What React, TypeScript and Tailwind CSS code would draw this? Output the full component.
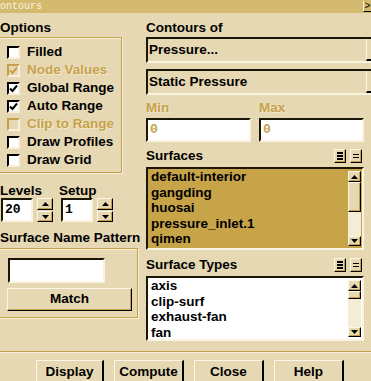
import React from "react";

const sunken =
  "border-2 border-t-[#1c1608] border-l-[#1c1608] border-b-[#faf3df] border-r-[#faf3df]";
const raised =
  "border border-t-[#fbf6e6] border-l-[#fbf6e6] border-b-black border-r-black shadow-[inset_-1px_-1px_0_#c4a04a]";
const etched =
  "border border-[#c4a04a] shadow-[1px_1px_0_#f8f0da,inset_1px_1px_0_#f8f0da]";

function Tick({ color }: { color: string }) {
  return (
    <svg width="9" height="9" viewBox="0 0 9 9">
      <path d="M1 4.5 L3.5 7 L8 1.5" fill="none" stroke={color} strokeWidth="2" />
    </svg>
  );
}

function Check({
  label,
  checked,
  disabled,
}: {
  label: string;
  checked?: boolean;
  disabled?: boolean;
}) {
  return (
    <div className="flex h-[18px] items-center">
      <span
        className={`flex h-[13px] w-[13px] items-center justify-center border-2 ${
          disabled
            ? "border-t-[#c4a04a] border-l-[#c4a04a] border-b-[#f8f0da] border-r-[#f8f0da] bg-[#e6d8b2]"
            : "border-t-black border-l-black border-b-[#f8f0da] border-r-[#f8f0da] bg-white"
        }`}
      >
        {checked && <Tick color={disabled ? "#c4a04a" : "#000"} />}
      </span>
      <span
        className={`ml-[7px] whitespace-nowrap ${
          disabled ? "text-[#c6a24a] [text-shadow:1px_1px_0_#f3ead0]" : "text-black"
        }`}
      >
        {label}
      </span>
    </div>
  );
}

function Arrow({ up }: { up?: boolean }) {
  return (
    <svg width="7" height="4" viewBox="0 0 7 4">
      <path d={up ? "M0 4 L3.5 0 L7 4 Z" : "M0 0 L7 0 L3.5 4 Z"} fill="#000" />
    </svg>
  );
}

function Spin({ value }: { value: string }) {
  return (
    <div className="flex h-[24px] items-start">
      <div
        className={`flex h-[24px] w-[32px] items-center bg-white pl-[2px] font-['Liberation_Mono',monospace] text-[13px] ${sunken}`}
      >
        {value}
      </div>
      <div className="ml-[4px] flex w-[16px] flex-col gap-[1px]">
        <div className={`flex h-[12px] items-center justify-center bg-[#e6d8b2] ${raised}`}>
          <Arrow up />
        </div>
        <div className={`flex h-[11px] items-center justify-center bg-[#e6d8b2] ${raised}`}>
          <Arrow />
        </div>
      </div>
    </div>
  );
}

function Dropdown({ text }: { text: string }) {
  return (
    <div className="flex h-[26px] w-[230px] items-center border-2 border-t-[#1c1608] border-l-[#1c1608] border-b-[#faf3df] border-r-transparent">
      <span className="flex-1 pl-[1px]">{text}</span>
      <div className="mr-[-6px] flex h-[22px] w-[14px] items-center justify-center border-l border-l-[#fbf6e6] border-b-2 border-b-black">
        <svg width="5" height="3" viewBox="0 0 5 3">
          <path d="M0 0 L5 0 L2.5 3 Z" fill="#000" />
        </svg>
      </div>
    </div>
  );
}

function ScrollBar({ thumb }: { thumb: number }) {
  return (
    <div className="flex h-full w-[13px] flex-col bg-[#f3ecd6]">
      <div className={`flex h-[11px] items-center justify-center bg-[#e6d8b2] ${raised}`}>
        <Arrow up />
      </div>
      <div className={`bg-[#e6d8b2] ${raised}`} style={{ height: thumb }} />
      <div className="flex-1 bg-[#f3ecd6]" />
      <div className={`flex h-[10px] items-center justify-center bg-[#e6d8b2] ${raised}`}>
        <Arrow />
      </div>
    </div>
  );
}

function ListBox({
  items,
  height,
  selected,
  thumb,
}: {
  items: string[];
  height: number;
  selected?: boolean;
  thumb: number;
}) {
  return (
    <div
      className={`flex w-[218px] ${sunken} ${selected ? "bg-[#c8a448]" : "bg-white"}`}
      style={{ height }}
    >
      <div className="flex-1 overflow-hidden pl-[3px] leading-[15.5px]">
        {items.map((it) => (
          <div key={it} className="whitespace-nowrap">
            {it}
          </div>
        ))}
      </div>
      <div className="mr-[1px] py-[2px]">
        <ScrollBar thumb={thumb} />
      </div>
    </div>
  );
}

function ListHeader({ label }: { label: string }) {
  return (
    <div className="flex h-[14px] w-[218px] items-center">
      <span className="flex-1">{label}</span>
      <div className={`flex h-[14px] w-[12px] flex-col items-center justify-center gap-[1px] bg-[#e6d8b2] ${raised}`}>
        <span className="h-[2px] w-[6px] bg-black" />
        <span className="h-[2px] w-[6px] bg-black" />
        <span className="h-[2px] w-[6px] bg-black" />
      </div>
      <div className={`ml-[4px] mr-[2px] flex h-[14px] w-[12px] flex-col items-center justify-center gap-[2px] bg-[#e6d8b2] ${raised}`}>
        <span className="h-[1px] w-[6px] bg-black" />
        <span className="h-[1px] w-[6px] bg-black" />
      </div>
    </div>
  );
}

function Button({ label, width }: { label: string; width: number }) {
  return (
    <div
      className="flex h-[26px] items-start justify-center border-l border-t border-l-[#fbf6e6] border-t-[#fbf6e6] border-r-2 border-r-black pt-[1px] leading-[20px]"
      style={{ width }}
    >
      {label}
    </div>
  );
}

export default function App() {
  return (
    <div className="h-[381px] w-[371px] overflow-hidden bg-[#e6d8b2] font-['Liberation_Sans',Arial,sans-serif] text-[13.5px] font-bold text-black">
      <div className="flex h-[13px] items-center bg-[#d4ba6e]">
        <span className="flex-1 font-['Liberation_Mono',monospace] text-[10px] font-normal leading-[13px] text-[#fbf3dc]">
          ontours
        </span>
        <span className="flex h-[11px] w-[8px] items-center justify-center border-l border-b border-l-[#fbf6e6] border-b-black font-['Liberation_Mono',monospace] text-[10px] font-normal">
          &gt;
        </span>
      </div>

      <div className="flex h-[338px]">
        {/* left column */}
        <div className="w-[140px] shrink-0">
          <div className="mt-[7px] h-[16px] leading-[16px]">Options</div>
          <div className={`-ml-[2px] mt-[1px] h-[136px] w-[124px] pl-[8px] pt-[5px] ${etched}`}>
            <Check label="Filled" />
            <Check label="Node Values" checked disabled />
            <Check label="Global Range" checked />
            <Check label="Auto Range" checked />
            <Check label="Clip to Range" disabled />
            <Check label="Draw Profiles" />
            <Check label="Draw Grid" />
          </div>

          <div className="mt-[10px] flex h-[15px] items-center leading-[15px]">
            <span className="w-[59px]">Levels</span>
            <span>Setup</span>
          </div>
          <div className="flex">
            <div className="ml-[1px] w-[60px]">
              <Spin value="20" />
            </div>
            <Spin value="1" />
          </div>

          <div className="mt-[8px] h-[16px] whitespace-nowrap leading-[16px]">
            Surface Name Pattern
          </div>
          <div className={`-ml-[2px] mt-[2px] h-[70px] w-[140px] pl-[9px] pt-[9px] ${etched}`}>
            <div className={`h-[25px] w-[97px] bg-white ${sunken}`} />
            <div
              className={`-ml-[1px] mt-[5px] flex h-[23px] w-[125px] items-center justify-center ${raised}`}
            >
              Match
            </div>
          </div>
        </div>

        {/* right column */}
        <div className="ml-[6px] w-[230px] shrink-0">
          <div className="mt-[7px] h-[16px] leading-[16px]">Contours of</div>
          <div className="mt-[1px]">
            <Dropdown text="Pressure..." />
          </div>
          <div className="mt-[6px]">
            <Dropdown text="Static Pressure" />
          </div>

          <div className="mt-[5px] flex h-[16px] items-center text-[#c6a24a] [text-shadow:1px_1px_0_#f3ead0]">
            <span className="w-[113px]">Min</span>
            <span>Max</span>
          </div>
          <div className="mt-[2px] flex gap-[8px]">
            <div
              className={`flex h-[24px] w-[105px] items-center bg-white pl-[2px] font-['Liberation_Mono',monospace] text-[13px] text-[#c6a24a] ${sunken}`}
            >
              0
            </div>
            <div
              className={`flex h-[24px] w-[105px] items-center bg-white pl-[2px] font-['Liberation_Mono',monospace] text-[13px] text-[#c6a24a] ${sunken}`}
            >
              0
            </div>
          </div>

          <div className="mt-[7px]">
            <ListHeader label="Surfaces" />
          </div>
          <div className="mt-[4px]">
            <ListBox
              items={["default-interior", "gangding", "huosai", "pressure_inlet.1", "qimen"]}
              height={83}
              selected
              thumb={30}
            />
          </div>

          <div className="mt-[8px]">
            <ListHeader label="Surface Types" />
          </div>
          <div className="mt-[4px]">
            <ListBox
              items={["axis", "clip-surf", "exhaust-fan", "fan"]}
              height={65}
              thumb={8}
            />
          </div>
        </div>
      </div>

      <div className="h-[2px] border-t border-b border-t-[#c4a04a] border-b-[#f8f0da]" />

      <div className="mt-[7px] flex gap-[10px] pl-[36px]">
        <Button label="Display" width={68} />
        <Button label="Compute" width={70} />
        <Button label="Close" width={70} />
        <Button label="Help" width={70} />
      </div>
    </div>
  );
}
